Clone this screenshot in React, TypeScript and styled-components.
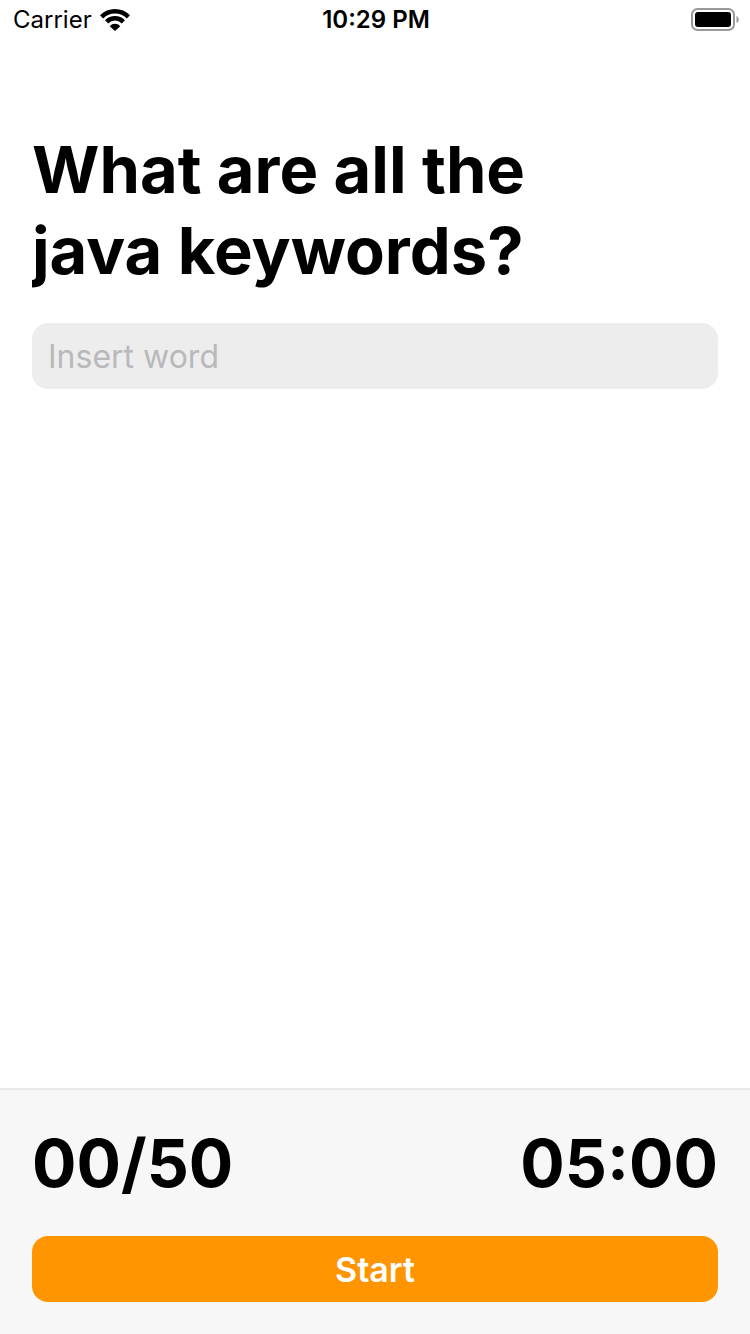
import React, { useState } from "react";
import styled, { createGlobalStyle } from "styled-components";

const GlobalStyle = createGlobalStyle`
  *, *::before, *::after { box-sizing: border-box; }
  body {
    margin: 0;
    background: #fff;
    color: #000;
    font-family: Inter, "Liberation Sans", sans-serif;
  }
`;

const Screen = styled.div`
  display: flex;
  flex-direction: column;
  min-height: 100vh;
`;

const StatusBar = styled.header`
  display: grid;
  grid-template-columns: 1fr auto 1fr;
  align-items: center;
  height: 40px;
  padding: 0 11px 0 13px;
  font-size: 24px;
  line-height: 40px;
`;

const Network = styled.div`
  display: flex;
  align-items: center;
  gap: 8px;
`;

const Clock = styled.time`
  font-weight: 600;
`;

const BatterySlot = styled.div`
  display: flex;
  justify-content: flex-end;
`;

const Content = styled.main`
  flex: 1;
  padding: 89px 32px 32px;
`;

const Title = styled.h1`
  max-width: 560px;
  margin: 0 0 32px;
  overflow: hidden;
  font-size: 65px;
  font-weight: 700;
  line-height: 81px;
`;

const WordInput = styled.input`
  display: block;
  width: 100%;
  height: 66px;
  padding: 0 16px;
  border: 0;
  border-radius: 16px;
  outline: 0;
  background: #ededed;
  color: #000;
  font: 400 32px Inter, "Liberation Sans", sans-serif;

  &::placeholder {
    color: #b9b9bb;
    opacity: 1;
  }
`;

const Footer = styled.footer`
  padding: 32px;
  border-top: 2px solid #e9e9e9;
  background: #f7f7f7;
`;

const Scores = styled.div`
  display: flex;
  justify-content: space-between;
  margin-bottom: 32px;
`;

const Score = styled.span`
  font-size: 66px;
  font-weight: 700;
  line-height: 82px;
`;

const StartButton = styled.button`
  display: block;
  width: 100%;
  height: 66px;
  border: 0;
  border-radius: 16px;
  background: #ff9500;
  color: #fff;
  font: 600 34px Inter, "Liberation Sans", sans-serif;
  cursor: pointer;
`;

const WifiIcon = () => (
  <svg width="30" height="22" viewBox="0 0 30 22" aria-hidden="true">
    <g fill="none" stroke="#000" strokeWidth="4.5">
      <path d="M1.6 7.8A19.2 19.2 0 0 1 28.4 7.8" />
      <path d="M6.6 12.8A12 12 0 0 1 23.4 12.8" />
    </g>
    <path d="M15 22L9.7 17.2A7.2 7.2 0 0 1 20.3 17.2Z" />
  </svg>
);

const BatteryIcon = () => (
  <svg width="48" height="24" viewBox="0 0 48 24" aria-hidden="true">
    <rect x="1" y="1" width="42" height="21" rx="5.5" fill="none" stroke="#999" strokeWidth="2" />
    <rect x="4" y="4" width="36" height="15" rx="3" />
    <path d="M45.5 8C48.5 9 48.5 14 45.5 15Z" fill="#999" />
  </svg>
);

export default function App() {
  const [word, setWord] = useState("");

  return (
    <Screen>
      <GlobalStyle />
      <StatusBar>
        <Network>
          Carrier
          <WifiIcon />
        </Network>
        <Clock>10:29 PM</Clock>
        <BatterySlot>
          <BatteryIcon />
        </BatterySlot>
      </StatusBar>
      <Content>
        <Title>What are all the java keywords?</Title>
        <WordInput
          type="text"
          aria-label="Insert word"
          placeholder="Insert word"
          value={word}
          onChange={(event) => setWord(event.target.value)}
        />
      </Content>
      <Footer>
        <Scores>
          <Score>00/50</Score>
          <Score>05:00</Score>
        </Scores>
        <StartButton type="button">Start</StartButton>
      </Footer>
    </Screen>
  );
}
